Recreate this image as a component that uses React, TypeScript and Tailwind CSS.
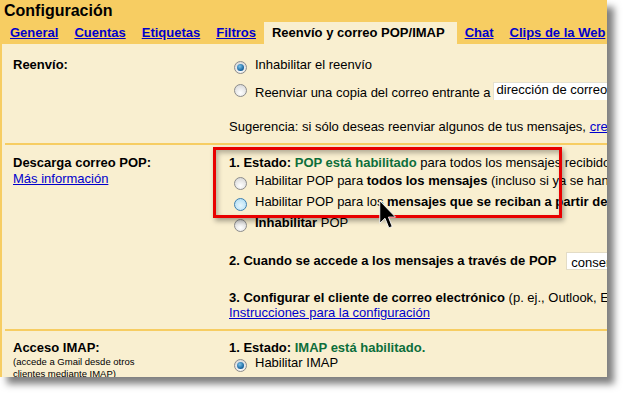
import React from 'react';

type RadioKind = 'off' | 'on' | 'hover';

const Radio = ({ kind = 'off', className = '' }: { kind?: RadioKind; className?: string }) => {
  const fill =
    kind === 'hover'
      ? 'border-[#3d7fb0] bg-[radial-gradient(circle_at_50%_60%,#e6f6fd,#a9daf3)]'
      : 'border-[#8c8c8c] bg-[radial-gradient(circle_at_50%_70%,#ffffff,#d2d2d2)]';
  return (
    <span className={`flex shrink-0 w-[13px] h-[13px] rounded-full border items-center justify-center ${fill} ${className}`}>
      {kind === 'on' && (
        <span className="w-[7px] h-[7px] rounded-full bg-[radial-gradient(circle_at_40%_35%,#7cc3ea,#13609a_70%,#0b3f6b)]" />
      )}
    </span>
  );
};

const tabs = ['General', 'Cuentas', 'Etiquetas', 'Filtros'];

export default function App() {
  return (
    <div className="relative w-[623px] h-[393px] bg-white overflow-hidden font-['Liberation_Sans',Arial,sans-serif] text-[13px] leading-[16px] text-black">
      <div className="relative w-[607px] h-[377px] overflow-hidden bg-[#f7cd62] shadow-[7px_7px_7px_rgba(0,0,0,0.5)]">
        {/* header */}
        <div className="h-[22px] pl-[4px] pt-[1px] text-[16px] leading-[20px] font-bold">Configuración</div>
        <div className="flex h-[22px] pl-[2px] whitespace-nowrap font-bold">
          {tabs.map(t => (
            <a key={t} href="#" className="flex items-center px-[8px] text-[#0000cc] underline">
              {t}
            </a>
          ))}
          <span className="flex items-center pl-[8px] pr-[12px] bg-[#f9efd0]">Reenvío y correo POP/IMAP</span>
          <a href="#" className="flex items-center px-[8px] text-[#0000cc] underline">Chat</a>
          <a href="#" className="flex items-center px-[8px] text-[#0000cc] underline">Clips de la Web</a>
        </div>

        {/* content */}
        <div className="h-[333px] border-l-2 border-[#f7cd62] bg-[#f9efd0] whitespace-nowrap">
          {/* Reenvío */}
          <div className="ml-[3px] h-[99px] pt-[13px] flex">
            <div className="w-[224px] shrink-0 pl-[8px] font-bold">Reenvío:</div>
            <div className="flex flex-col shrink-0">
              <div className="flex items-start h-[16px]">
                <Radio kind="on" className="ml-[5px] mt-[4px]" />
                <span className="ml-[8px]">Inhabilitar el reenvío</span>
              </div>
              <div className="flex items-start h-[19px] mt-[9px]">
                <Radio className="ml-[5px] mt-[2px]" />
                <span className="ml-[8px] mt-[3px]">Reenviar una copia del correo entrante a</span>
                <span className="ml-[2px] h-[18px] w-[140px] bg-white pl-[3px] leading-[14px] border-t border-l border-[#e6e1cf]">
                  dirección de correo electrónico
                </span>
              </div>
              <div className="mt-[18px]">
                Sugerencia: si sólo deseas reenviar algunos de tus mensajes,{' '}
                <a href="#" className="text-[#0000cc] underline">crea un filtro</a>.
              </div>
            </div>
          </div>

          {/* Descarga correo POP */}
          <div className="ml-[3px] h-[186px] border-t-2 border-[#f7cd62] pt-[10px] flex">
            <div className="w-[224px] shrink-0 pl-[8px]">
              <div className="font-bold">Descarga correo POP:</div>
              <a href="#" className="block text-[#0000cc] underline">Más información</a>
            </div>
            <div className="flex flex-col shrink-0">
              <div>
                <b>1. Estado: </b>
                <b className="text-[#0d6e3b]">POP está habilitado</b> para todos los mensajes recibidos desde el 12/03/09
              </div>
              <div className="flex items-start h-[21px]">
                <Radio className="ml-[5px] mt-[6px]" />
                <span className="ml-[8px] mt-[2px]">
                  Habilitar POP para <b>todos los mensajes</b> (incluso si ya se han descargado)
                </span>
              </div>
              <div className="flex items-start h-[21px]">
                <Radio kind="hover" className="ml-[5px] mt-[6px]" />
                <span className="ml-[8px] mt-[2px]">
                  Habilitar POP para los <b>mensajes que se reciban a partir de ahora</b>
                </span>
              </div>
              <div className="flex items-start h-[21px]">
                <Radio className="ml-[5px] mt-[6px]" />
                <span className="ml-[8px] mt-[2px]">
                  <b>Inhabilitar</b> POP
                </span>
              </div>
              <div className="flex items-center h-[18px] mt-[18px]">
                <b>2. Cuando se accede a los mensajes a través de POP</b>
                <span className="ml-[10px] h-[18px] w-[180px] bg-white pl-[4px] leading-[20px] border border-[#e3dcc6]">
                  conservar la copia de Gmail en Recibidos
                </span>
              </div>
              <div className="mt-[20px] leading-[15px]">
                <b>3. Configurar el cliente de correo electrónico</b> (p. ej., Outlook, Eudora, Netscape Mail)
              </div>
              <a href="#" className="leading-[15px] text-[#0000cc] underline">Instrucciones para la configuración</a>
            </div>
          </div>

          {/* Acceso IMAP */}
          <div className="ml-[3px] border-t-2 border-[#f7cd62] pt-[9px] flex">
            <div className="w-[224px] shrink-0 pl-[8px]">
              <div className="font-bold leading-[15px]">Acceso IMAP:</div>
              <div className="text-[9.5px] leading-[12px] mt-[1px]">
                (accede a Gmail desde otros
                <br />
                clientes mediante IMAP)
              </div>
            </div>
            <div className="flex flex-col shrink-0">
              <div className="leading-[15px]">
                <b>1. Estado: </b>
                <b className="text-[#0d6e3b]">IMAP está habilitado.</b>
              </div>
              <div className="flex items-start h-[16px]">
                <Radio kind="on" className="ml-[5px] mt-[4px]" />
                <span className="ml-[8px]">Habilitar IMAP</span>
              </div>
            </div>
          </div>
        </div>

        {/* annotation box */}
        <div className="absolute left-[213px] top-[147px] w-[349px] h-[71px] border-[3px] border-[#e80000] shadow-[2px_3px_5px_rgba(0,0,0,0.35),inset_2px_3px_5px_rgba(0,0,0,0.28)]" />

        {/* mouse pointer */}
        <svg className="absolute left-[379px] top-[200px]" width="18" height="30" viewBox="0 0 12 20">
          <path d="M0.5 0.5 L0.5 15.5 L4 12.2 L6.6 18.6 L8.8 17.7 L6.3 11.4 L11 11.4 Z" fill="#000" stroke="#fff" strokeWidth="0.6" strokeLinejoin="miter" />
        </svg>
      </div>
    </div>
  );
}
